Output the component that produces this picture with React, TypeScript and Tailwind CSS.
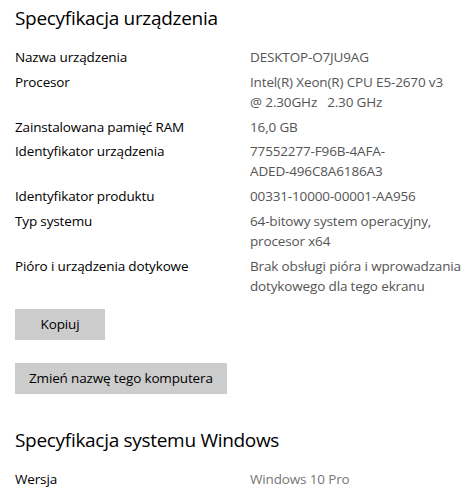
import * as React from 'react';

const deviceSpecs = [
  { label: 'Nazwa urządzenia', value: ['DESKTOP-O7JU9AG'] },
  { label: 'Procesor', value: ['Intel(R) Xeon(R) CPU E5-2670 v3', '@ 2.30GHz   2.30 GHz'] },
  { label: 'Zainstalowana pamięć RAM', value: ['16,0 GB'] },
  { label: 'Identyfikator urządzenia', value: ['77552277-F96B-4AFA-', 'ADED-496C8A6186A3'] },
  { label: 'Identyfikator produktu', value: ['00331-10000-00001-AA956'] },
  { label: 'Typ systemu', value: ['64-bitowy system operacyjny,', 'procesor x64'] },
  { label: 'Pióro i urządzenia dotykowe', value: ['Brak obsługi pióra i wprowadzania', 'dotykowego dla tego ekranu'] },
];

function SpecRow({ label, value, muted }: { label: string; value: string[]; muted?: boolean }) {
  return (
    <div className="grid grid-cols-[235px_1fr] text-[13.5px] leading-[20px] tracking-[-0.15px]">
      <div className="text-black">{label}</div>
      <div className={muted ? 'text-[#767676]' : 'text-[#555555]'}>
        {value.map((line, i) => (
          <div key={i} className="whitespace-pre">{line}</div>
        ))}
      </div>
    </div>
  );
}

export default function App() {
  return (
    <div
      className="w-[473px] h-[494px] overflow-hidden bg-white pl-[15px] pt-[4px]"
      style={{ fontFamily: '"Open Sans", "Noto Sans", sans-serif' }}
    >
      <h1 className="text-[19px] leading-[28px] tracking-[-0.3px] text-black">Specyfikacja urządzenia</h1>

      <div className="mt-[15px] flex flex-col gap-[4.75px]">
        {deviceSpecs.map(spec => (
          <SpecRow key={spec.label} label={spec.label} value={spec.value} />
        ))}
      </div>

      <div className="mt-[13px] flex flex-col items-start gap-[23px]">
        <button className="h-[31px] min-w-[90px] bg-[#cccccc] px-[14px] text-[13.5px] tracking-[-0.15px] text-black">Kopiuj</button>
        <button className="h-[31px] min-w-[90px] bg-[#cccccc] px-[14px] text-[13.5px] tracking-[-0.15px] text-black">Zmień nazwę tego komputera</button>
      </div>

      <h2 className="mt-[32px] text-[19px] leading-[28px] tracking-[-0.3px] text-black">Specyfikacja systemu Windows</h2>

      <div className="mt-[15px]">
        <SpecRow label="Wersja" value={['Windows 10 Pro']} muted />
      </div>
    </div>
  );
}
